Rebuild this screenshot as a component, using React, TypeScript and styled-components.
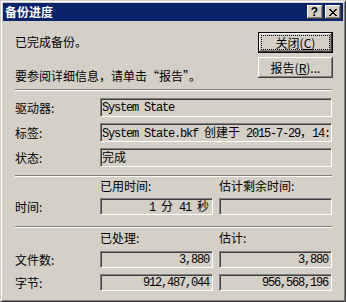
import React from 'react';
import styled, { createGlobalStyle } from 'styled-components';

const Global = createGlobalStyle`
  html, body { margin: 0; padding: 0; background: #D4D0C8; }
  body {
    font-family: "Noto Sans CJK SC", "Liberation Sans", sans-serif;
    font-size: 12px;
    color: #000;
  }
`;

const Window = styled.div`
  box-sizing: border-box;
  width: 346px;
  height: 302px;
  background: #D4D0C8;
  border: 1px solid;
  border-color: #D4D0C8 #404040 #404040 #D4D0C8;
  box-shadow: inset 1px 1px #ffffff, inset -1px -1px #808080;
  padding: 2px;
  display: flex;
  flex-direction: column;
`;

const TitleBar = styled.div`
  height: 18px;
  flex: none;
  background: #0A246A;
  display: flex;
  align-items: center;
  padding: 0 2px;
`;

const Title = styled.span`
  flex: 1;
  color: #ffffff;
  font-weight: bold;
  font-size: 12px;
  line-height: 18px;
  font-family: "Noto Sans CJK SC", sans-serif;
`;

const CaptionButtons = styled.div`
  display: flex;
  gap: 2px;
`;

const CaptionButton = styled.div`
  box-sizing: border-box;
  width: 16px;
  height: 14px;
  background: #D4D0C8;
  box-shadow: inset -1px -1px #404040, inset 1px 1px #ffffff, inset -2px -2px #808080;
  display: flex;
  align-items: center;
  justify-content: center;
`;

const HelpGlyph = styled.span`
  font-family: "Liberation Sans", sans-serif;
  font-weight: bold;
  font-size: 12px;
  line-height: 12px;
  margin: 0 1px 0 0;
`;

const Body = styled.div`
  flex: 1;
  display: flex;
  flex-direction: column;
  padding: 0 10px 0 12px;
`;

const TopSection = styled.div`
  margin-top: 11px;
  display: flex;
  justify-content: space-between;
  align-items: flex-start;
`;

const Messages = styled.div`
  display: flex;
  flex-direction: column;
`;

const Message = styled.div<{ $mt: number }>`
  margin-top: ${p => p.$mt}px;
  line-height: 14px;
  white-space: nowrap;
`;

const Buttons = styled.div`
  display: flex;
  flex-direction: column;
  gap: 4px;
`;

const PushButton = styled.div<{ $default?: boolean }>`
  box-sizing: border-box;
  width: 75px;
  height: 21px;
  display: flex;
  padding: ${p => (p.$default ? '2px' : '3px')};
  background: #D4D0C8;
  border: ${p => (p.$default ? '1px solid #000000' : 'none')};
  box-shadow: inset -1px -1px #404040, inset 1px 1px #ffffff, inset -2px -2px #808080;
`;

const ButtonLabel = styled.span<{ $focused?: boolean }>`
  flex: 1;
  display: flex;
  align-items: center;
  justify-content: center;
  border: 1px dotted ${p => (p.$focused ? '#000000' : 'transparent')};
  line-height: 12px;
  white-space: nowrap;
`;

const Separator = styled.div<{ $mt: number }>`
  margin-top: ${p => p.$mt}px;
  margin-right: 1px;
  height: 0;
  border-top: 1px solid #808080;
  border-bottom: 1px solid #ffffff;
`;

const FieldGrid = styled.div<{ $mt: number; $cols: string; $rowGap: number }>`
  margin-top: ${p => p.$mt}px;
  display: grid;
  grid-template-columns: ${p => p.$cols};
  column-gap: 6px;
  row-gap: ${p => p.$rowGap}px;
  align-items: center;
`;

const Label = styled.div`
  line-height: 14px;
  white-space: nowrap;
`;

const Field = styled.div<{ $h: number; $right?: boolean }>`
  box-sizing: border-box;
  height: ${p => p.$h}px;
  border: 1px solid;
  border-color: #808080 #ffffff #ffffff #808080;
  box-shadow: inset 1px 1px #404040;
  background: #D4D0C8;
  display: flex;
  align-items: center;
  justify-content: ${p => (p.$right ? 'flex-end' : 'flex-start')};
  padding: ${p => (p.$right ? '0 3px 0 1px' : '0 1px 0 1px')};
  overflow: hidden;
`;

const Value = styled.span`
  font-family: "Liberation Mono", "Noto Sans CJK SC", monospace;
  font-size: 12px;
  letter-spacing: -1.2px;
  line-height: 12px;
  white-space: pre;
`;

const Han = styled.span`
  font-family: "Noto Sans CJK SC", sans-serif;
  letter-spacing: 0;
`;

const CloseIcon = () => (
  <svg width="8" height="7" viewBox="0 0 8 7" shapeRendering="crispEdges">
    <path
      fill="#000"
      d="M0 0h2v1H0z M6 0h2v1H6z M1 1h2v1H1z M5 1h2v1H5z M2 2h4v1H2z M3 3h2v1H3z M2 4h4v1H2z M1 5h2v1H1z M5 5h2v1H5z M0 6h2v1H0z M6 6h2v1H6z"
    />
  </svg>
);

export default function App() {
  return (
    <>
      <Global />
      <Window>
        <TitleBar>
          <Title>备份进度</Title>
          <CaptionButtons>
            <CaptionButton aria-label="帮助">
              <HelpGlyph>?</HelpGlyph>
            </CaptionButton>
            <CaptionButton aria-label="关闭">
              <CloseIcon />
            </CaptionButton>
          </CaptionButtons>
        </TitleBar>
        <Body>
          <TopSection>
            <Messages>
              <Message $mt={3}>已完成备份。</Message>
              <Message $mt={20}>要参阅详细信息，请单击“报告”。</Message>
            </Messages>
            <Buttons>
              <PushButton $default>
                <ButtonLabel $focused>
                  关闭(<u>C</u>)
                </ButtonLabel>
              </PushButton>
              <PushButton>
                <ButtonLabel>
                  报告(<u>R</u>)...
                </ButtonLabel>
              </PushButton>
            </Buttons>
          </TopSection>

          <Separator $mt={6} />

          <FieldGrid $mt={7} $cols="79px 232px" $rowGap={6}>
            <Label>驱动器:</Label>
            <Field $h={19}>
              <Value>System State</Value>
            </Field>
            <Label>标签:</Label>
            <Field $h={19}>
              <Value>
                System State.bkf <Han>创建于</Han> 2015-7-29<Han>，</Han>14:
              </Value>
            </Field>
            <Label>状态:</Label>
            <Field $h={19}>
              <Value>
                <Han>完成</Han>
              </Value>
            </Field>
          </FieldGrid>

          <Separator $mt={8} />

          <FieldGrid $mt={2} $cols="79px 113px 113px" $rowGap={5}>
            <span />
            <Label>已用时间:</Label>
            <Label>估计剩余时间:</Label>
            <Label>时间:</Label>
            <Field $h={17} $right>
              <Value>
                1 <Han>分</Han> 41 <Han>秒</Han>
              </Value>
            </Field>
            <Field $h={17} $right />
          </FieldGrid>

          <Separator $mt={11} />

          <FieldGrid $mt={3} $cols="79px 113px 113px" $rowGap={6}>
            <span />
            <Label>已处理:</Label>
            <Label>估计:</Label>
            <Label>文件数:</Label>
            <Field $h={17} $right>
              <Value>3,880</Value>
            </Field>
            <Field $h={17} $right>
              <Value>3,880</Value>
            </Field>
            <Label>字节:</Label>
            <Field $h={17} $right>
              <Value>912,487,044</Value>
            </Field>
            <Field $h={17} $right>
              <Value>956,568,196</Value>
            </Field>
          </FieldGrid>
        </Body>
      </Window>
    </>
  );
}
